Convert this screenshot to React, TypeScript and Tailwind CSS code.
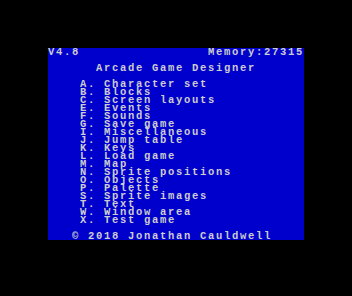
const LINES = [
  "V4.8            Memory:27315",
  "",
  "      Arcade Game Designer",
  "",
  "    A. Character set",
  "    B. Blocks",
  "    C. Screen layouts",
  "    E. Events",
  "    F. Sounds",
  "    G. Save game",
  "    I. Miscellaneous",
  "    J. Jump table",
  "    K. Keys",
  "    L. Load game",
  "    M. Map",
  "    N. Sprite positions",
  "    O. Objects",
  "    P. Palette",
  "    S. Sprite images",
  "    T. Text",
  "    W. Window area",
  "    X. Test game",
  "",
  "   © 2018 Jonathan Cauldwell",
];

export default function App() {
  return (
    <div className="h-[296px] w-[352px] bg-black pl-12 pt-12">
      <div className="h-[192px] w-[256px] bg-[#0000cd] font-['Liberation_Mono',monospace] text-[10.5px] font-bold tracking-[1.7px] text-[#cdcdcd]">
        {LINES.map((l, i) => (
          <div key={i} className="h-[8px] whitespace-pre leading-[8px]">
            {i === 0 ? (
              <div className="flex justify-between">
                <span>V4.8</span>
                <span>Memory:27315</span>
              </div>
            ) : (
              l
            )}
          </div>
        ))}
      </div>
    </div>
  );
}
